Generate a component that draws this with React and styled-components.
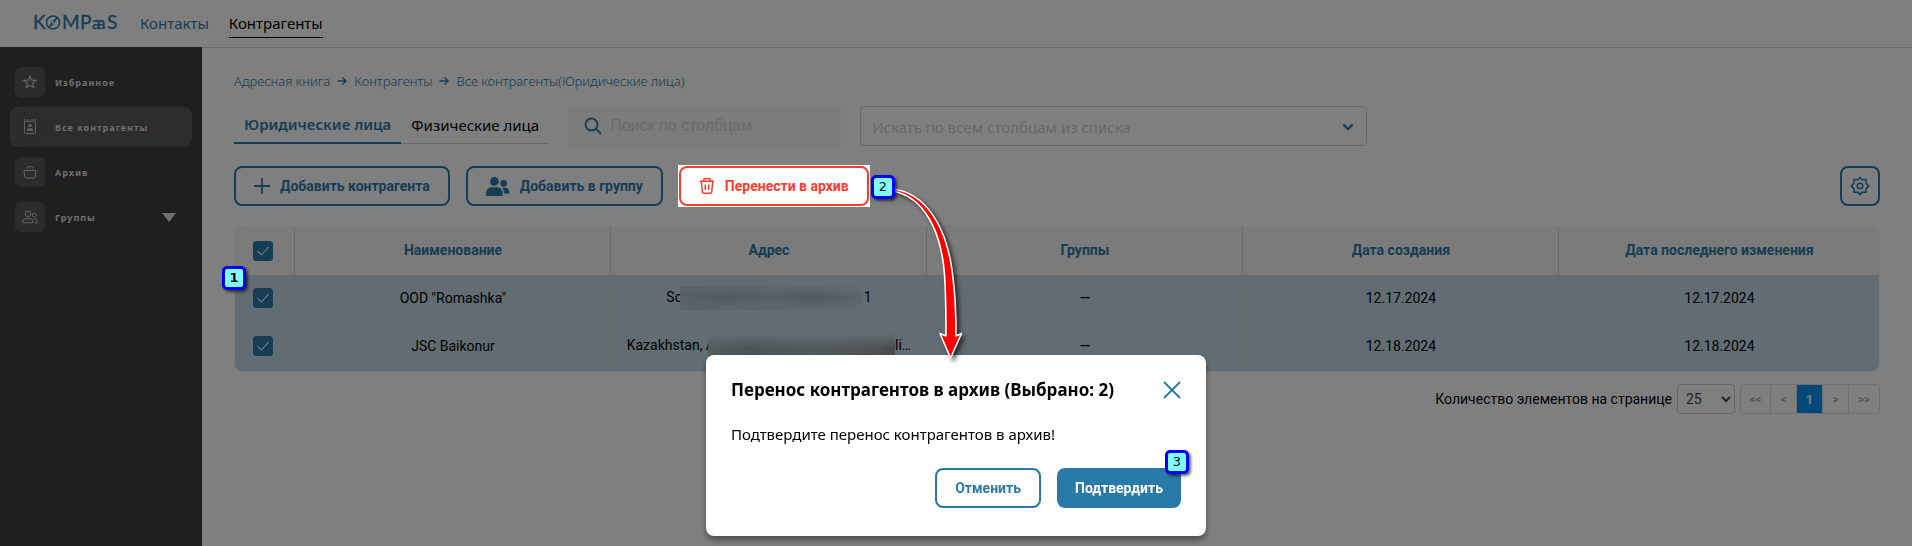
import React from 'react'
import styled, { createGlobalStyle, css } from 'styled-components'

const BLUE = '#2a7aa9'
const RED = '#ff3b30'
const TEXT_FONT = "'Noto Sans', 'Open Sans', sans-serif"
const UI_FONT = "Roboto, 'Liberation Sans', sans-serif"

const COLUMNS = ['Наименование', 'Адрес', 'Группы', 'Дата создания', 'Дата последнего изменения']

const ROWS = [
    { id: 1, name: 'OOD "Romashka"', before: 'So', after: '1', size: 'short', date: '12.17.2024' },
    { id: 2, name: 'JSC Baikonur', before: 'Kazakhstan, A', after: 'li…', size: 'long', date: '12.18.2024' },
]

const Logo = () => (
    <LogoSvg viewBox="0 0 88 33" width="88" height="33" role="img" aria-label="KOMPaS">
        <g fill={BLUE} fontFamily="Lato, sans-serif" fontSize="19" stroke={BLUE} strokeWidth="0.3">
            <text x="1" y="22">K</text>
            <text x="30" y="22">M</text>
            <text x="48" y="22">P</text>
            <text x="60" y="22" fontSize="17">a</text>
            <text x="65" y="22" fontSize="17">a</text>
            <text x="75" y="22">S</text>
        </g>
        <circle cx="21" cy="15.500" r="6.500" fill="none" stroke={BLUE} strokeWidth="1.600" />
        <path d="M26 9.500l-3.800 7.200-6.200 4.800 3.800-7.200z" fill={BLUE} />
        <circle cx="21" cy="15.500" r="1.300" fill="#fff" />
    </LogoSvg>
)

const StarIcon = () => (
    <Icon viewBox="0 0 16 16" $size={16}>
        <path d="M8 2.200l1.700 3.900 4.200.4-3.200 2.800 1 4.200L8 11.300l-3.700 2.200 1-4.200L2.100 6.500l4.200-.4z" strokeWidth="1.300" />
    </Icon>
)

const BookIcon = () => (
    <Icon viewBox="0 0 16 16" $size={16}>
        <path d="M2.500 2.500v11a1 1 0 0 0 1 1h9a1 1 0 0 0 1-1v-11M2 .8h2M5.500.8h1.500M9 .8h1.500M12 .8h2M2.500 2.200h11" />
        <circle cx="8" cy="6.500" r="1.800" fill="currentColor" stroke="none" />
        <path d="M5 12V10.800Q5 9.200 6.600 9.200H9.400Q11 9.200 11 10.800V12z" fill="currentColor" stroke="none" />
    </Icon>
)

const BasketIcon = () => (
    <Icon viewBox="0 0 16 16" $size={16}>
        <path d="M2 6.500h12l-.7 6q-.2 1.500-1.700 1.500H4.400q-1.500 0-1.700-1.500zM4.500 4.500Q6 2.500 8 2.500T11.500 4.500" />
    </Icon>
)

const GroupIcon = () => (
    <Icon viewBox="0 0 16 14" $size={16}>
        <circle cx="6" cy="3.800" r="2.800" />
        <path d="M.8 12.800V11.500Q1 8.700 4 8.700H8Q11 8.700 11 11.500V12.800z" />
        <circle cx="12.200" cy="5" r="1.900" />
        <path d="M11.500 8.800h1.200q2.500.2 2.500 2.700v1.300H13" />
    </Icon>
)

const MENU = [
    { label: 'Избранное', icon: StarIcon },
    { label: 'Все контрагенты', icon: BookIcon, active: true },
    { label: 'Архив', icon: BasketIcon },
    { label: 'Группы', icon: GroupIcon, expandable: true },
]

const Arrow = () => (
    <Icon viewBox="0 0 10 10" $size={10}>
        <path d="M.5 5h8.500M5.500 1.500L9 5 5.500 8.500" strokeWidth="1.400" />
    </Icon>
)

const UsersIcon = () => (
    <svg viewBox="0 0 23 18" width="24" height="19" fill="currentColor" aria-hidden="true">
        <circle cx="8" cy="4.200" r="4.200" />
        <path d="M0 18v-2.500Q.5 9.800 6 9.800h4q5.500 0 6 5.700V18z" />
        <circle cx="17" cy="6" r="3.200" />
        <path d="M17.500 15.800h5v-1.300q-.3-4.200-4-4.300h-3q2 2 2 5.600z" />
    </svg>
)

const TrashIcon = () => (
    <Icon viewBox="0 0 16 16" $size={16}>
        <path d="M.8 3.200h14.400M4.800 3V1.500Q4.800.8 5.500.8h5q.7 0 .7.700V3M2.300 3.500l1 10.500q.1 1.200 1.300 1.200h6.800q1.200 0 1.300-1.200l1-10.500M6.300 6.500v5.500M9.700 6.500v5.500" strokeWidth="1.500" />
    </Icon>
)

const GearIcon = () => (
    <Icon viewBox="0 0 20 20" $size={20}>
        <path d="M10 1.500l2.200 2.200 3.800-.2.200 3.600L18.500 10l-2.300 2.600-.2 3.600-3.800-.1L10 18.500l-2.200-2.400-3.800.1-.2-3.600L1.500 10l2.300-2.900L4 3.500l3.800.2z" strokeWidth="1.600" />
        <circle cx="10" cy="10" r="2.700" strokeWidth="1.600" />
    </Icon>
)

const CurvedArrow = () => (
    <ArrowSvg viewBox="0 0 90 180" width="90" height="180" aria-hidden="true">
        <path
            d="M2 3C34 8 53 44 55 95Q56 118 56 148L50 145.500 60.500 170 71.500 145.500 66 148Q66 112 63 90C58 40 36 4 2 1z"
            fill="#f00"
            stroke="#fff"
            strokeWidth="1.600"
            strokeLinejoin="round"
        />
    </ArrowSvg>
)

const Sidebar = () => (
    <SidebarWrapper>
        {MENU.map(({ label, icon: ItemIcon, active, expandable }) => (
            <MenuItem key={label} type="button" $active={active}>
                <IconBox><ItemIcon /></IconBox>
                <span>{label}</span>
                {expandable && <Triangle />}
            </MenuItem>
        ))}
    </SidebarWrapper>
)

const ContractorsTable = () => (
    <TableWrapper>
        <TableFrame>
            <Table>
                <colgroup>
                    <CheckCol />
                    <DataCol />
                    <DataCol />
                    <DataCol />
                    <DataCol />
                    <col />
                </colgroup>
                <thead>
                    <tr>
                        <HeadCell $check><Checkbox aria-label="Выбрать все" defaultChecked /></HeadCell>
                        {COLUMNS.map((column) => <HeadCell key={column}>{column}</HeadCell>)}
                    </tr>
                </thead>
                <tbody>
                    {ROWS.map((row) => (
                        <tr key={row.id}>
                            <Cell $check><Checkbox aria-label={row.name} defaultChecked /></Cell>
                            <Cell>{row.name}</Cell>
                            <Cell>{row.before}<Smudge $long={row.size === 'long'} />{row.after}</Cell>
                            <Cell>—</Cell>
                            <Cell>{row.date}</Cell>
                            <Cell>{row.date}</Cell>
                        </tr>
                    ))}
                </tbody>
            </Table>
        </TableFrame>
        <RowsBadge>1</RowsBadge>
    </TableWrapper>
)

const ArchiveModal = () => (
    <Overlay>
        <Modal role="dialog" aria-labelledby="archive-title">
            <ModalHeader>
                <ModalTitle id="archive-title">Перенос контрагентов в архив (Выбрано: 2)</ModalTitle>
                <CloseButton type="button" aria-label="Закрыть">
                    <Icon viewBox="0 0 18 18" $size={18}>
                        <path d="M1 1l16 16M17 1L1 17" strokeWidth="1.800" />
                    </Icon>
                </CloseButton>
            </ModalHeader>
            <ModalText>Подтвердите перенос контрагентов в архив!</ModalText>
            <ModalActions>
                <Button type="button">Отменить</Button>
                <Anchor>
                    <Button type="button" $filled>Подтвердить</Button>
                    <ConfirmBadge>3</ConfirmBadge>
                </Anchor>
            </ModalActions>
        </Modal>
    </Overlay>
)

export default function App() {
    return (
        <>
            <GlobalStyle />
            <Page>
                <Header>
                    <Logo />
                    <Nav>
                        <NavLink href="#contacts">Контакты</NavLink>
                        <NavLink href="#contractors" $active>Контрагенты</NavLink>
                    </Nav>
                </Header>
                <Body>
                    <Sidebar />
                    <Main>
                        <Breadcrumbs>
                            <a href="#book">Адресная книга</a>
                            <Arrow />
                            <a href="#contractors">Контрагенты</a>
                            <Arrow />
                            <a href="#all">Все контрагенты(Юридические лица)</a>
                        </Breadcrumbs>
                        <Filters>
                            <Tabs>
                                <Tab type="button" $active>Юридические лица</Tab>
                                <Tab type="button">Физические лица</Tab>
                            </Tabs>
                            <Search>
                                <Icon viewBox="0 0 18 18" $size={18}>
                                    <circle cx="7.500" cy="7.500" r="6" strokeWidth="1.800" />
                                    <path d="M12 12l5 5" strokeWidth="1.800" />
                                </Icon>
                                <SearchInput type="text" aria-label="Поиск" placeholder="Поиск по столбцам" />
                            </Search>
                            <ColumnSelectWrapper>
                                <ColumnSelect aria-label="Столбцы">
                                    <option>Искать по всем столбцам из списка</option>
                                </ColumnSelect>
                                <Chevron viewBox="0 0 12 8" aria-hidden="true">
                                    <path d="M1.500 1.500L6 6l4.500-4.500" />
                                </Chevron>
                            </ColumnSelectWrapper>
                        </Filters>
                        <Toolbar>
                            <Button type="button">
                                <Icon viewBox="0 0 16 16" $size={16}><path d="M8 0v16M0 8h16" strokeWidth="1.800" /></Icon>
                                Добавить контрагента
                            </Button>
                            <Button type="button"><UsersIcon />Добавить в группу</Button>
                            <ArchiveAnchor>
                                <Button type="button" $danger><TrashIcon />Перенести в архив</Button>
                                <CurvedArrow />
                                <ArchiveBadge>2</ArchiveBadge>
                            </ArchiveAnchor>
                            <SettingsButton type="button" aria-label="Настройки"><GearIcon /></SettingsButton>
                        </Toolbar>
                        <ContractorsTable />
                        <Footer>
                            <label htmlFor="page-size">Количество элементов на странице</label>
                            <PageSize id="page-size"><option>25</option></PageSize>
                            <Pager>
                                <PageButton type="button" $wide>&lt;&lt;</PageButton>
                                <PageButton type="button">&lt;</PageButton>
                                <PageButton type="button" $active>1</PageButton>
                                <PageButton type="button">&gt;</PageButton>
                                <PageButton type="button" $wide>&gt;&gt;</PageButton>
                            </Pager>
                        </Footer>
                    </Main>
                </Body>
            </Page>
            <ArchiveModal />
        </>
    )
}




const GlobalStyle = createGlobalStyle`
    *, *::before, *::after {
        box-sizing: border-box;
    }
    body {
        margin: 0;
        background-color: white;
        color: black;
        font-family: ${TEXT_FONT};
    }
    button, input, select {
        margin: 0;
        font-family: inherit;
    }
    button {
        cursor: pointer;
    }
    a {
        color: inherit;
        text-decoration: none;
    }
`
const Icon = styled.svg.attrs({ 'aria-hidden': true })`
    width: ${({ $size }) => $size}px;
    height: ${({ $size }) => $size}px;
    flex: none;
    fill: none;
    stroke: currentColor;
`
const Page = styled.div`
    min-height: 100vh;
    display: flex;
    flex-direction: column;
`
const Header = styled.header`
    height: 47px;
    padding: 0 32px;
    display: flex;
    align-items: center;
    gap: 20px;
`
const LogoSvg = styled.svg`
    flex: none;
`
const Nav = styled.nav`
    display: flex;
    gap: 20px;
`
const NavLink = styled.a`
    padding: 4px 0;
    font-size: 15px;
    line-height: 20px;
    color: ${({ $active }) => ($active ? 'black' : BLUE)};
    border-bottom: 1px solid ${({ $active }) => ($active ? 'black' : 'transparent')};
`
const Body = styled.div`
    flex: 1 1 auto;
    display: flex;
`
const SidebarWrapper = styled.aside`
    flex: 0 0 202px;
    padding: 15px 10px;
    display: flex;
    flex-direction: column;
    gap: 5px;
    background-color: #3e3e3e;
`
const MenuItem = styled.button`
    height: 40px;
    padding: 0 16px 0 5px;
    display: flex;
    align-items: center;
    gap: 10px;
    border: none;
    border-radius: 8px;
    background-color: ${({ $active }) => ($active ? '#5a5a5a' : 'transparent')};
    color: #dedede;
    font-size: 9px;
    font-weight: 700;
    letter-spacing: 1px;
`
const IconBox = styled.span`
    width: 30px;
    height: 30px;
    display: flex;
    align-items: center;
    justify-content: center;
    border-radius: 6px;
    background-color: #585858;
    color: #c4c4c4;
`
const Triangle = styled.span`
    margin-left: auto;
    border: 7px solid transparent;
    border-top: 9px solid #dedede;
    border-bottom: none;
`
const Main = styled.main`
    flex: 1 1 auto;
    min-width: 0;
    padding: 23px 32px;
    border-top: 1px solid #d4d4d4;
`
const Breadcrumbs = styled.nav`
    display: flex;
    align-items: center;
    gap: 7px;
    color: ${BLUE};
    font-size: 13px;
    font-weight: 300;
    line-height: 20px;
`
const Filters = styled.div`
    margin-top: 15px;
    display: flex;
    gap: 19px;
`
const Tabs = styled.div`
    display: flex;
    align-items: flex-start;
`
const Tab = styled.button`
    height: 38px;
    padding: 0 10px;
    border: none;
    border-bottom: ${({ $active }) => ($active ? `2px solid ${BLUE}` : '1px solid #d0d0d0')};
    background: none;
    color: ${({ $active }) => ($active ? BLUE : 'black')};
    font-size: 15px;
    font-weight: ${({ $active }) => ($active ? 600 : 400)};
    line-height: 20px;
`
const Search = styled.div`
    flex: 0 0 273px;
    height: 40px;
    padding: 0 16px;
    display: flex;
    align-items: center;
    gap: 8px;
    border-radius: 4px;
    background-color: #f6f6f6;
    color: ${BLUE};
`
const SearchInput = styled.input`
    min-width: 0;
    flex: 1 1 auto;
    padding: 0;
    border: none;
    outline: none;
    background: none;
    font-family: 'Liberation Sans', Arial, sans-serif;
    font-size: 16px;
    &::placeholder {
        color: #d8d8d8;
    }
`
const ColumnSelectWrapper = styled.div`
    position: relative;
    flex: 0 1 507px;
    height: 40px;
`
const ColumnSelect = styled.select`
    width: 100%;
    height: 100%;
    padding: 2px 36px 0 11px;
    appearance: none;
    border: 1px solid #d2d2d2;
    border-radius: 4px;
    background-color: white;
    color: #d0d0d0;
    font-size: 15px;
`
const Chevron = styled.svg`
    position: absolute;
    right: 13px;
    top: 17px;
    width: 12px;
    height: 8px;
    fill: none;
    stroke: ${BLUE};
    stroke-width: 2.4;
    pointer-events: none;
`
const Toolbar = styled.div`
    margin-top: 20px;
    display: flex;
    gap: 16px;
`
const Button = styled.button`
    height: 40px;
    padding: 0 18px;
    display: flex;
    align-items: center;
    justify-content: center;
    gap: 10px;
    border: 2px solid ${BLUE};
    border-radius: 8px;
    background-color: white;
    color: ${BLUE};
    font-family: ${UI_FONT};
    font-size: 14px;
    font-weight: 700;
    white-space: nowrap;
    ${({ $danger }) => $danger && css`
        border-color: ${RED};
        color: ${RED};
    `}
    ${({ $filled }) => $filled && css`
        border: none;
        background-color: ${BLUE};
        color: white;
    `}
`
const SettingsButton = styled(Button)`
    width: 40px;
    margin-left: auto;
    padding: 0;
`
const Anchor = styled.div`
    position: relative;
`
// stays lit above the dimming overlay
const ArchiveAnchor = styled(Anchor)`
    z-index: 20;
    background-color: white;
    box-shadow: 0 0 0 1px white;
`
const ArrowSvg = styled.svg`
    position: absolute;
    left: 211px;
    top: 22px;
    overflow: visible;
    pointer-events: none;
    filter: drop-shadow(3px 3px 2px rgba(0, 0, 0, 0.6));
`
const Badge = styled.span`
    position: absolute;
    z-index: 20;
    width: 24px;
    height: 24px;
    display: flex;
    align-items: center;
    justify-content: center;
    border: 3px solid #00f;
    border-radius: 5px;
    background-color: #80ffff;
    box-shadow: 2px 2px 3px rgba(0, 0, 0, 0.6);
    color: black;
    font-family: 'DejaVu Sans', sans-serif;
    font-size: 13px;
    line-height: 16px;
`
const RowsBadge = styled(Badge)`
    left: -12px;
    top: 40px;
    font-weight: 700;
`
const ArchiveBadge = styled(Badge)`
    left: 192px;
    top: 9px;
`
const ConfirmBadge = styled(Badge)`
    right: -8px;
    top: -18px;
`
const TableWrapper = styled.div`
    position: relative;
    margin-top: 20px;
`
const TableFrame = styled.div`
    overflow: hidden;
    border: 1px solid #f4f4f4;
    border-radius: 8px;
`
const Table = styled.table`
    width: 100%;
    table-layout: fixed;
    border-collapse: separate;
    border-spacing: 0;
    font-family: ${UI_FONT};
    font-size: 14px;
`
const CheckCol = styled.col`
    width: 60px;
`
const DataCol = styled.col`
    width: 19.22%;
`
const cellStyles = css`
    height: 48px;
    padding: ${({ $check }) => ($check ? '0 0 0 18px' : '0 3px 2px 4px')};
    text-align: ${({ $check }) => ($check ? 'left' : 'center')};
    white-space: nowrap;
    &:not(:last-child) {
        border-right: 1px solid #d6d6d6;
    }
`
const HeadCell = styled.th`
    ${cellStyles}
    background-color: #f6f6f6;
    color: ${BLUE};
    font-weight: 700;
`
const Cell = styled.td`
    ${cellStyles}
    padding-bottom: 2px;
    background-color: #c2dae5;
`
const Checkbox = styled.input.attrs({ type: 'checkbox' })`
    width: 20px;
    height: 20px;
    margin: 0;
    display: grid;
    place-items: center;
    appearance: none;
    border: 1px solid ${BLUE};
    border-radius: 3px;
    &:checked {
        background-color: ${BLUE};
    }
    &:checked::before {
        content: '';
        width: 6px;
        height: 11px;
        margin-bottom: 3px;
        border: solid white;
        border-width: 0 1px 1px 0;
        transform: rotate(42deg);
    }
`
const Smudge = styled.span`
    display: inline-block;
    vertical-align: middle;
    width: 182px;
    height: 24px;
    margin: 0 2px 0 -3px;
    background:
        radial-gradient(ellipse 60px 10px at 46px 50%, #a6b5be, transparent),
        radial-gradient(ellipse 60px 10px at 134px 50%, #a3b2bb, transparent),
        linear-gradient(90deg, #b4c6d0, #b9cdd8 60%, #bfd6e1);
    ${({ $long }) => $long && css`
        width: 187px;
        margin: 0 0 0 -7px;
        background:
            linear-gradient(180deg, #c2dae5, transparent 60%),
            linear-gradient(90deg, #a9b8c0, #99a6ad 22%, #a6b3b9 55%, #9ba5aa 90%, #8f9492);
    `}
`
const Footer = styled.div`
    margin-top: 12px;
    display: flex;
    align-items: center;
    justify-content: flex-end;
    gap: 5px;
    font-family: ${UI_FONT};
    font-size: 14px;
`
const PageSize = styled.select`
    width: 58px;
    height: 30px;
    padding: 0 0 0 4px;
    border: 1px solid #ccc;
    border-radius: 4px;
    background-color: white;
    color: #444;
    font-size: 14px;
`
const Pager = styled.div`
    height: 30px;
    display: flex;
    overflow: hidden;
    border: 1px solid #e0e0e0;
    border-radius: 4px;
`
const PageButton = styled.button`
    width: ${({ $wide }) => ($wide ? 30 : 26)}px;
    padding: 0;
    border: none;
    background-color: ${({ $active }) => ($active ? '#0092f4' : 'white')};
    color: ${({ $active }) => ($active ? 'white' : '#a8a8a8')};
    font-size: ${({ $active }) => ($active ? 13 : 11)}px;
    font-weight: 700;
    &:not(:last-child) {
        border-right: 1px solid #e0e0e0;
    }
`
const Overlay = styled.div`
    position: fixed;
    inset: 0;
    z-index: 10;
    padding-bottom: 10px;
    display: flex;
    align-items: flex-end;
    justify-content: center;
    background-color: rgba(0, 0, 0, 0.5);
`
const Modal = styled.div`
    width: 500px;
    padding: 23px 25px 25px;
    border-radius: 8px;
    background-color: white;
    box-shadow: 0 4px 6px rgba(0, 0, 0, 0.4);
`
const ModalHeader = styled.div`
    display: flex;
    align-items: center;
    justify-content: space-between;
`
const ModalTitle = styled.h2`
    margin: 0;
    font-size: 17px;
    font-weight: 700;
    line-height: 24px;
`
const CloseButton = styled.button`
    padding: 0;
    display: flex;
    border: none;
    background: none;
    color: ${BLUE};
`
const ModalText = styled.p`
    margin: 20px 0 22px;
    font-size: 15px;
    line-height: 24px;
`
const ModalActions = styled.div`
    padding-bottom: 3px;
    display: flex;
    justify-content: flex-end;
    gap: 16px;
`
